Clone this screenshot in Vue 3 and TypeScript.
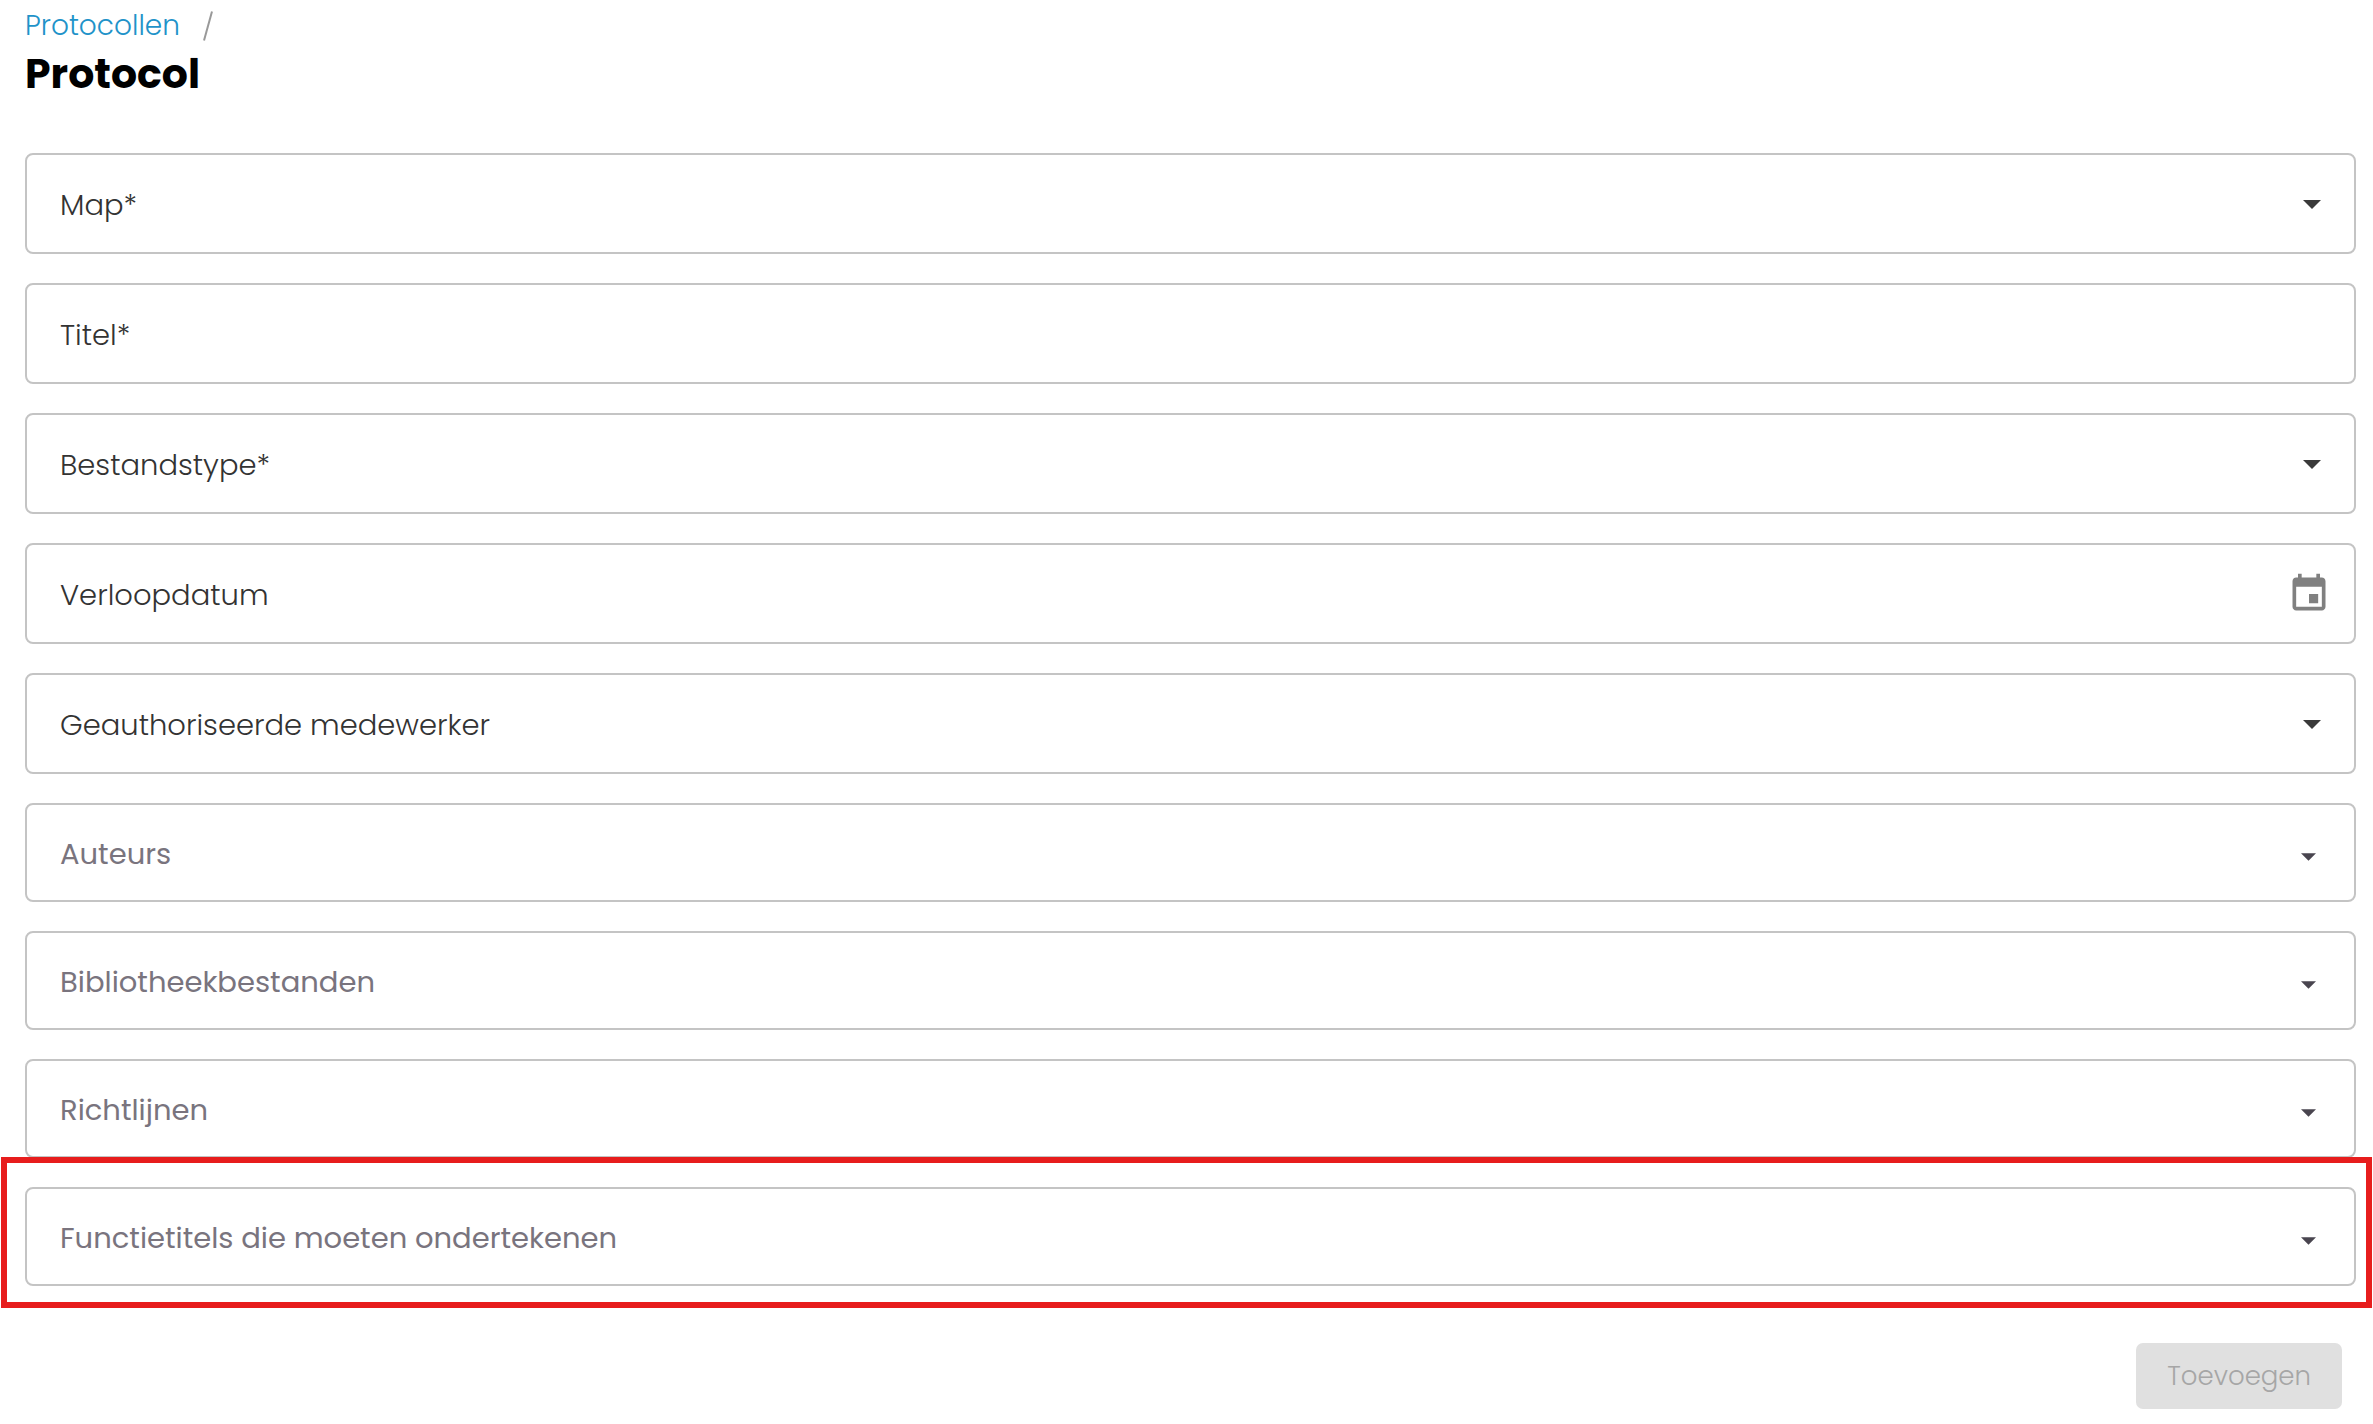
<script setup lang="ts">
import { reactive } from 'vue'

type Kind = 'select' | 'text' | 'date' | 'multi'

interface Field {
  id: string
  label: string
  kind: Kind
  highlighted?: boolean
}

const fields: Field[] = [
  { id: 'map', label: 'Map*', kind: 'select' },
  { id: 'titel', label: 'Titel*', kind: 'text' },
  { id: 'bestandstype', label: 'Bestandstype*', kind: 'select' },
  { id: 'verloopdatum', label: 'Verloopdatum', kind: 'date' },
  { id: 'medewerker', label: 'Geauthoriseerde medewerker', kind: 'select' },
  { id: 'auteurs', label: 'Auteurs', kind: 'multi' },
  { id: 'bibliotheek', label: 'Bibliotheekbestanden', kind: 'multi' },
  { id: 'richtlijnen', label: 'Richtlijnen', kind: 'multi' },
  { id: 'functietitels', label: 'Functietitels die moeten ondertekenen', kind: 'multi', highlighted: true },
]

const values = reactive<Record<string, string>>(
  Object.fromEntries(fields.map((field) => [field.id, ''])),
)
</script>

<template>
  <main class="page">
    <nav class="crumbs">
      <a class="crumb" href="#">Protocollen</a>
      <svg class="slash" viewBox="0 0 12 30" aria-hidden="true"><path d="M2 29.500L10 .5" /></svg>
    </nav>
    <h1 class="title">Protocol</h1>

    <form class="form" @submit.prevent>
      <div
        v-for="field in fields"
        :key="field.id"
        class="field"
        :class="[field.kind, { highlighted: field.highlighted }]"
      >
        <label class="label" :for="field.id">{{ field.label }}</label>
        <input
          v-if="field.kind === 'text' || field.kind === 'date'"
          :id="field.id"
          v-model="values[field.id]"
          class="control"
          type="text"
        />
        <select v-else :id="field.id" v-model="values[field.id]" class="control">
          <option value=""></option>
        </select>
        <button v-if="field.kind === 'date'" class="calendar" type="button" aria-label="Kalender">
          <svg viewBox="0 0 24 24" aria-hidden="true">
            <path
              d="M17 12h-5v5h5v-5zM16 1v2H8V1H6v2H5c-1.110 0-1.990.9-1.990 2L3 19c0 1.100.89 2 2 2h14c1.100 0 2-.9 2-2V5c0-1.100-.9-2-2-2h-1V1h-2zm3 18H5V8h14v11z"
            />
          </svg>
        </button>
        <svg v-else-if="field.kind !== 'text'" class="arrow" viewBox="0 0 18 9" aria-hidden="true">
          <path d="M0 0h18L9 9z" />
        </svg>
      </div>

      <div class="actions">
        <button class="submit" type="submit" disabled>Toevoegen</button>
      </div>
    </form>
  </main>
</template>

<style>
body {
  background: #fff;
}
</style>

<style scoped>
.page {
  padding: 6px 17px 15px 25px;
  font-family: Poppins, Inter, 'Open Sans', sans-serif;
  font-weight: 300;
  color: #333;
}

.crumbs {
  display: flex;
  align-items: center;
  gap: 22px;
  height: 40px;
}

.crumb {
  font-size: 28px;
  line-height: 40px;
  color: #1f93c9;
  text-decoration: none;
}

.slash {
  width: 12px;
  height: 30px;
  fill: none;
  stroke: #999;
  stroke-width: 2;
}

.title {
  margin: 0;
  font-size: 41px;
  font-weight: 700;
  line-height: 56px;
  color: #000;
}

.form {
  display: flex;
  flex-direction: column;
  gap: 29px;
  padding-top: 51px;
}

.field {
  position: relative;
  display: flex;
  align-items: center;
  box-sizing: border-box;
  height: 101px;
  padding: 0 33px;
  border: 2px solid #c4c4c4;
  border-radius: 8px;
}

.label {
  padding-top: 3px;
  font-size: 29px;
  line-height: 40px;
  white-space: nowrap;
}

.control {
  flex: 1;
  min-width: 0;
  height: 60px;
  padding: 0 16px;
  border: 0;
  outline: 0;
  appearance: none;
  background: transparent;
  color: inherit;
  font: inherit;
  font-size: 29px;
}

.arrow {
  width: 18px;
  height: 9px;
  margin-top: 1px;
  fill: #3a3a3a;
}

.date {
  padding-right: 23px;
}

.calendar {
  display: flex;
  padding: 0;
  border: 0;
  background: none;
}

.calendar svg {
  width: 44px;
  height: 44px;
  fill: #808080;
}

.multi {
  height: 99px;
  padding-right: 38px;
}

.multi .label {
  color: #79747e;
  font-weight: 400;
}

.multi .arrow {
  width: 15px;
  height: 8px;
  margin-top: 8px;
  fill: #49454f;
}

.highlighted::after {
  content: '';
  position: absolute;
  inset: -32px -18px -24px -26px;
  border: 6px solid #e71d1d;
  pointer-events: none;
}

.actions {
  display: flex;
  justify-content: flex-end;
  padding: 28px 14px 0 0;
}

.submit {
  height: 66px;
  padding: 0 31px;
  border: 0;
  border-radius: 7px;
  background: #e0e0e0;
  color: #a6a6a6;
  font-family: inherit;
  font-size: 26px;
  font-weight: 300;
}
</style>
